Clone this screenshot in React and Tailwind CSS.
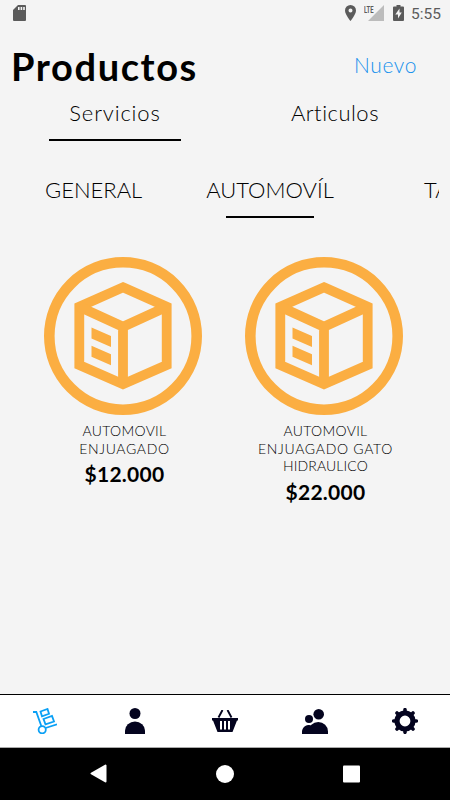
import React from 'react';

const products = [
  {
    id: 1,
    lines: [
      { text: 'AUTOMOVIL', cls: 'tracking-[0.3px]' },
      { text: 'ENJUAGADO', cls: 'tracking-[0.65px]' },
    ],
    price: '$12.000',
  },
  {
    id: 2,
    lines: [
      { text: 'AUTOMOVIL', cls: 'tracking-[0.3px]' },
      { text: 'ENJUAGADO GATO', cls: 'tracking-[0.7px]' },
      { text: 'HIDRAULICO', cls: 'tracking-[0.15px]' },
    ],
    price: '$22.000',
  },
];

const StatusBar = () => (
  <div className="flex h-7 items-center justify-between pl-[13px] pr-[9px] text-[#5b5b5b]">
    <svg className="mt-[-2px] h-4 w-[13px]" viewBox="0 0 13 16" fill="currentColor">
      <path d="M5 0h7a1 1 0 0 1 1 1v14a1 1 0 0 1-1 1H1a1 1 0 0 1-1-1V5z" />
      <path d="M5 2h1.6v3H5zM7.6 2h1.6v3H7.6zM10.2 2h1.6v3h-1.6z" fill="#f4f4f4" />
    </svg>
    <div className="mt-[-2px] flex h-4 items-center">
      <svg className="h-4 w-[11px]" viewBox="0 0 11 16" fill="currentColor">
        <path fillRule="evenodd" d="M5.5 0A5.5 5.5 0 0 0 0 5.5C0 9.6 5.5 16 5.5 16S11 9.6 11 5.5A5.5 5.5 0 0 0 5.5 0zm0 3.4a2 2 0 1 1 0 4 2 2 0 0 1 0-4z" />
      </svg>
      <div className="relative ml-2 h-4 w-5">
        <svg className="absolute inset-0 h-4 w-5" viewBox="0 0 20 16">
          <path d="M20 0v16H4z" fill="#bcbcbc" />
        </svg>
        <span className="absolute left-0 top-px origin-left scale-x-[0.62] font-['Roboto'] text-[9.500px] font-bold leading-[8px]">LTE</span>
      </div>
      <svg className="ml-[9px] h-4 w-[11px]" viewBox="0 0 11 16" fill="currentColor">
        <path d="M3.5 0h4v1.5H10a1 1 0 0 1 1 1V15a1 1 0 0 1-1 1H1a1 1 0 0 1-1-1V2.500a1 1 0 0 1 1-1h2.500z" />
        <path d="M6.500 3.500L2.300 9.500H5V13.500L8.800 7.500H6.500z" fill="#f4f4f4" />
      </svg>
      <span className="ml-[7px] mt-[2px] font-['Roboto'] text-[15.500px] leading-4">5:55</span>
    </div>
  </div>
);

const BoxIcon = () => (
  <svg className="h-[158px] w-[158px]" viewBox="0 0 158 158" fill="none" stroke="#fbae42">
    <circle cx="79" cy="79" r="73.700" strokeWidth="10.600" />
    <path d="M79 30.300L122.700 49.800V108L79 127.200L35.300 108V49.800z" strokeWidth="9.800" />
    <path d="M35.300 49.800L79 69.800L122.700 49.800M79 69.800V127" strokeWidth="9.800" />
    <path d="M47.500 70.500l19.500 8.500v11l-19.500-8.500zM47.500 88.800l19.500 8.500v11l-19.500-8.500z" fill="#fbae42" stroke="none" />
  </svg>
);

const ProductCard = ({ product }) => (
  <div className="flex w-[201px] flex-col items-center">
    <BoxIcon />
    <div className="ml-[4px] mt-[7px] flex flex-col items-center text-[14px] font-light leading-[17.500px]">
      {product.lines.map((line) => (
        <span key={line.text} className={line.cls}>{line.text}</span>
      ))}
    </div>
    <span className="ml-[4px] mt-[5px] text-[21px] font-bold leading-6 tracking-[0.250px]">{product.price}</span>
  </div>
);

const TrolleyIcon = () => (
  <svg className="h-[26px] w-6" viewBox="0 0 24 26" fill="none" stroke="#0aa0f5" strokeWidth="1.800">
    <path d="M0 4h3.300l5 14M12.500 20L24 16.300" />
    <circle cx="9.200" cy="21.800" r="3.600" />
    <path d="M7.500 3.500L14.500 1L16 5.800L9 8.300zM10.500 11L19 8L21 13.500L12.500 16.400z" />
  </svg>
);

const PersonIcon = () => (
  <svg className="h-[26px] w-5" viewBox="0 0 20 26" fill="#04041f">
    <circle cx="10" cy="5.500" r="5.500" />
    <path d="M0 26v-3.500a10 9 0 0 1 20 0V26z" />
  </svg>
);

const BasketIcon = () => (
  <svg className="h-[22px] w-[26px]" viewBox="0 0 26 22" fill="#04041f">
    <path d="M0 8h26v2.500h-1L20.500 22h-15L1 10.500H0z" />
    <path d="M10.500 0L6.500 7.500M15.500 0L19.500 7.500" stroke="#04041f" strokeWidth="1.900" />
    <path d="M9 11v8.500M13 11v8.500M17 11v8.500" stroke="white" strokeWidth="2" />
  </svg>
);

const PeopleIcon = () => (
  <svg className="h-[25px] w-[26px]" viewBox="0 0 26 25" fill="#04041f">
    <circle cx="16.700" cy="5.300" r="5.300" />
    <circle cx="7" cy="10" r="4" />
    <path d="M6.500 25v-2.500a9.750 9.500 0 0 1 19.500 0V25zM0 25v-2.500a7 6.500 0 0 1 10-5.800V25z" />
  </svg>
);

const GearIcon = () => (
  <svg className="h-[26px] w-[26px]" viewBox="0 0 26 26" fill="none" stroke="#04041f">
    <circle cx="13" cy="13" r="8" strokeWidth="5.200" />
    <path d="M13 1.700v2.500M13 21.800v2.500M1.700 13h2.500M21.800 13h2.500M5 5l2 2M19 19l2 2M5 21l2-2M19 7l2-2" strokeWidth="3.600" strokeLinecap="round" />
  </svg>
);

export default function App() {
  return (
    <div className="flex h-[800px] w-[450px] flex-col overflow-hidden bg-[#f4f4f4] font-['Lato',sans-serif] text-black">
      <StatusBar />

      <div className="flex h-[66px] items-center justify-between pl-[11px] pr-[33px]">
        <h1 className="mt-[10px] text-[38px] font-bold leading-[48px] tracking-[1.600px]">Productos</h1>
        <span className="mt-2 text-[21px] font-light tracking-[0.600px] text-[#1691ed]">Nuevo</span>
      </div>

      {/* Main tabs */}
      <div className="flex h-12 px-[5px] text-[22px] font-light [font-variant-ligatures:none]">
        <div className="flex w-[220px] flex-col items-center">
          <span className="mt-[5px] leading-7 tracking-[0.850px]">Servicios</span>
          <div className="mt-3 h-[2px] w-[132px] bg-black" />
        </div>
        <div className="flex w-[220px] flex-col items-center">
          <span className="mt-[5px] leading-7 tracking-[0.500px]">Articulos</span>
        </div>
      </div>

      {/* Categories */}
      <div className="mr-[11px] mt-[34px] flex h-[42px] overflow-hidden whitespace-nowrap text-[22px] font-light leading-7">
        <span className="ml-[45px] w-[97px] shrink-0">GENERAL</span>
        <div className="ml-16 flex w-[128px] shrink-0 flex-col items-center">
          <span>AUTOMOVÍL</span>
          <div className="mt-[12px] h-[2px] w-[88px] bg-black" />
        </div>
        <span className="ml-[90px] shrink-0">TAPICERIA</span>
      </div>

      <div className="mt-[39px] flex flex-1 items-start pl-[22px]">
        {products.map((product) => <ProductCard key={product.id} product={product} />)}
      </div>

      <div className="grid h-[54px] grid-cols-5 place-items-center border-b border-t border-b-[#aaa] border-t-black bg-white">
        <TrolleyIcon />
        <PersonIcon />
        <BasketIcon />
        <PeopleIcon />
        <GearIcon />
      </div>

      {/* Android navigation */}
      <div className="flex h-[52px] items-center justify-center bg-black">
        <svg className="h-5 w-[270px]" viewBox="0 0 270 20" fill="white">
          <path d="M15.500 1.500v16L1.500 9.500z" stroke="white" strokeWidth="2" strokeLinejoin="round" />
          <circle cx="135" cy="10" r="9" />
          <rect x="253" y="1.500" width="17" height="17" rx="1" />
        </svg>
      </div>
    </div>
  );
}
